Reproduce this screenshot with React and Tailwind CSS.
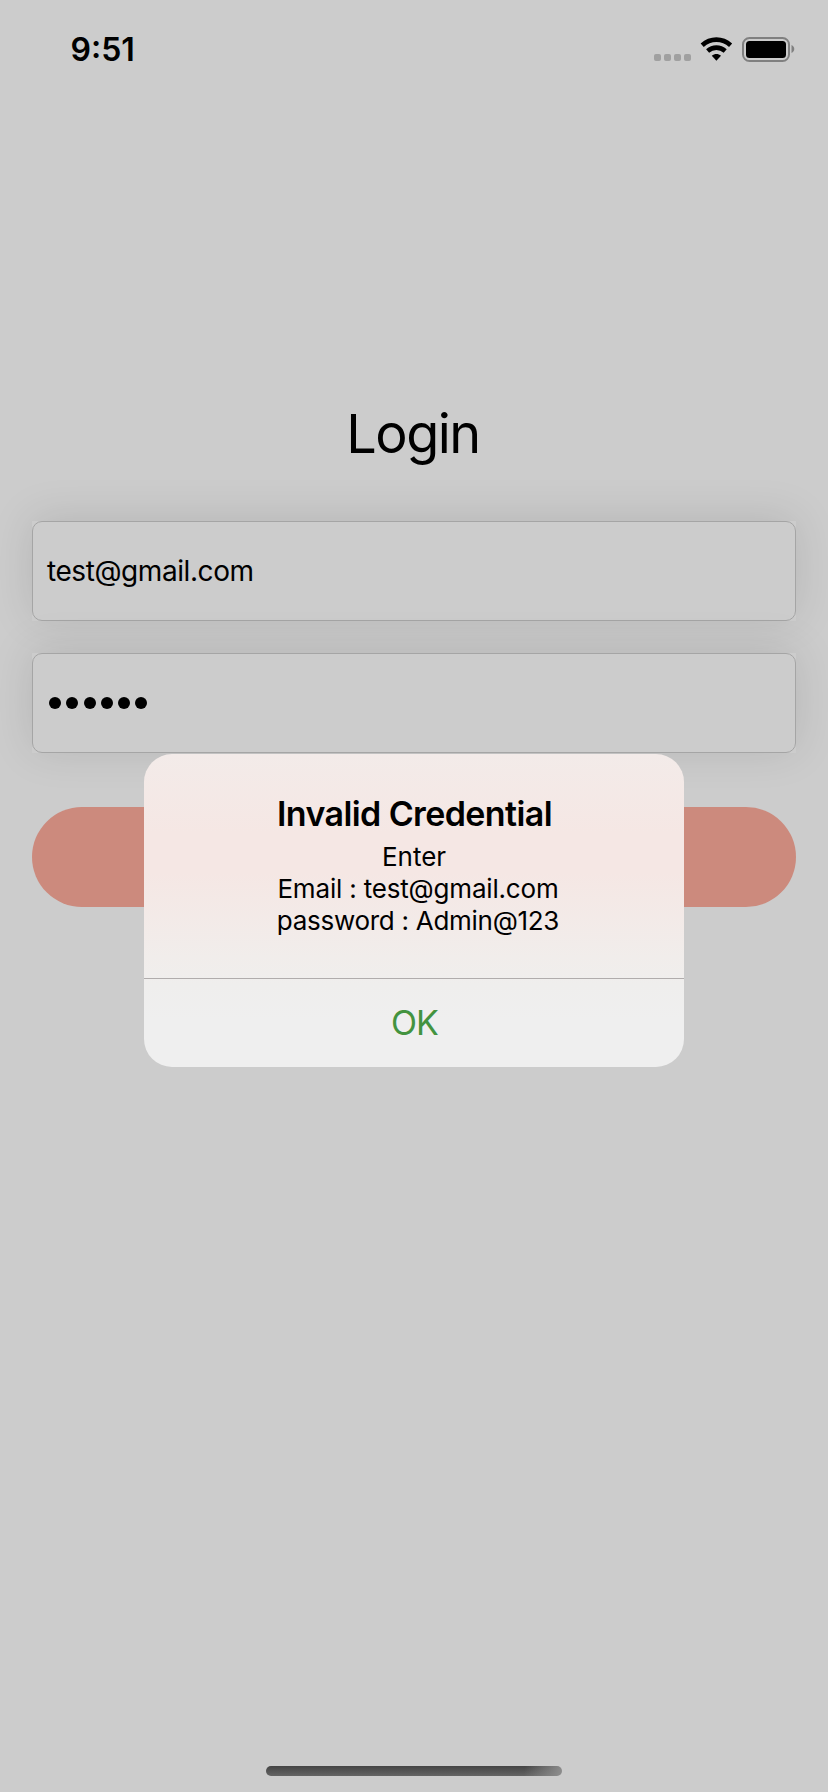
function Field({ children }) {
  return (
    <div className="h-[100px] bg-[#cccccc] shadow-[0_-3px_44px_rgba(0,0,0,0.115)]">
      <div className="flex h-full items-center rounded-[10px] border border-[#a5a5a5] pl-[14px]">{children}</div>
    </div>
  );
}

function StatusBar() {
  return (
    <header className="flex h-[98px] items-start justify-between pl-[70.5px] pr-[33px]">
      <span className="mt-[30px] text-[32px] leading-[40px] font-semibold">9:51</span>
      <div className="mt-[36px] flex items-start">
        <div className="mt-[18px] flex gap-[3px]">
          <i className="size-[7px] rounded-[2px] bg-[#a0a0a0]" />
          <i className="size-[7px] rounded-[2px] bg-[#a0a0a0]" />
          <i className="size-[7px] rounded-[2px] bg-[#a0a0a0]" />
          <i className="size-[7px] rounded-[2px] bg-[#a0a0a0]" />
        </div>
        <svg className="ml-[9px] mt-px" width="33" height="25" viewBox="0 0 33 25" fill="none">
          <path d="M2.2 8.2C10.4 .7 22.4 .7 30.6 8.2" stroke="#000" strokeWidth="4.6" />
          <path d="M7.6 14C12.8 9.5 20 9.5 25.2 14" stroke="#000" strokeWidth="4.6" />
          <path d="M11.8 18.7C14.5 16.5 18.3 16.5 21 18.7L16.4 23.8Z" fill="#000" />
        </svg>
        <svg className="ml-[8px]" width="54" height="27" viewBox="0 0 54 27">
          <rect x="2" y="2" width="46" height="23" rx="6.5" fill="none" stroke="#808080" strokeWidth="2" />
          <rect x="5" y="5" width="40" height="17" rx="3.5" fill="#000" />
          <path d="M50.5 9C54.2 10.5 54.2 15.5 50.5 17Z" fill="#808080" />
        </svg>
      </div>
    </header>
  );
}

export default function App() {
  return (
    <div className="relative flex h-[1792px] w-[828px] flex-col overflow-hidden bg-[#cccccc] font-['Inter',sans-serif] text-black">
      <StatusBar />
      <main className="flex flex-col px-8 pt-[300px]">
        <h1 className="pr-[2px] text-center text-[54px] leading-[72px] font-normal tracking-[-1.5px]">Login</h1>
        <div className="mt-[51px] flex flex-col gap-8">
          <Field>
            <span className="text-[28px] leading-[36px] tracking-[-0.42px]">test@gmail.com</span>
          </Field>
          <Field>
            <div className="flex gap-[5.3px] pl-[2px]" aria-label="Password">
              {[0, 1, 2, 3, 4, 5].map((i) => (
                <i key={i} className="size-[12px] rounded-full bg-black" />
              ))}
            </div>
          </Field>
        </div>
        <button className="mt-[54px] h-[100px] rounded-full bg-[#cc8a7d]" aria-label="Login" />
      </main>

      <section
        role="dialog"
        className="absolute left-[144px] top-[754px] flex h-[313px] w-[540px] flex-col overflow-hidden rounded-[28px] bg-[linear-gradient(180deg,#f3ebe9_0%,#f5e7e4_25%,#f5e7e4_38%,#f1edeb_65%,#efeeed_74%,#efefef_85%,#efefef_100%)]"
      >
        <div className="flex h-[224px] flex-col items-center pt-[40px]">
          <h2 className="pl-px text-[34px] leading-[40px] font-semibold tracking-[-0.6px]">Invalid Credential</h2>
          <div className="mt-[7px] flex flex-col items-center text-[26px] leading-[32px]">
            <p>Enter</p>
            <p className="pl-[8px] tracking-[-0.18px]">Email : test@gmail.com</p>
            <p className="pl-[8px] tracking-[-0.28px]">password : Admin@123</p>
          </div>
        </div>
        <button className="flex h-[89px] items-center justify-center border-t border-[#b0acac] pl-px text-[34px] leading-[40px] tracking-[-0.9px] text-[#43933f]">
          OK
        </button>
      </section>

      <div className="mx-auto mt-auto mb-[16px] h-[10px] w-[296px] rounded-full bg-[linear-gradient(100deg,transparent_87%,#8e8e8e_100%),linear-gradient(180deg,#444444,#646464)]" />
    </div>
  );
}
